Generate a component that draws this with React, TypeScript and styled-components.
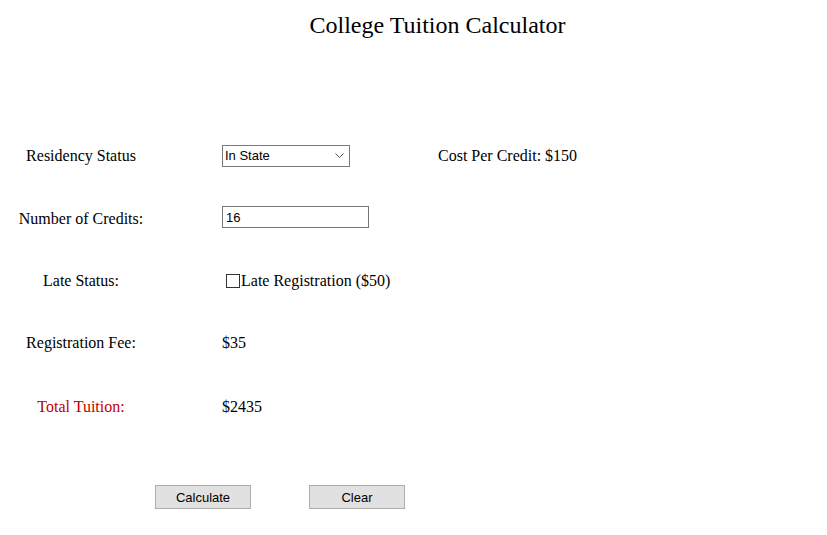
import React, { useState } from 'react'
import styled, { createGlobalStyle } from 'styled-components'

const GlobalStyle = createGlobalStyle`
  html, body {
    margin: 0;
    padding: 0;
    background: #ffffff;
  }
  body {
    font-family: 'Liberation Serif', 'Times New Roman', serif;
    font-size: 16px;
    color: #000;
  }
`

const Page = styled.div`
  width: 827px;
  height: 535px;
`

const Title = styled.h1`
  margin: 0;
  height: 50px;
  padding-left: 48px;
  font-size: 24px;
  font-weight: normal;
  line-height: 50px;
  text-align: center;
`

const Form = styled.div`
  display: grid;
  grid-template-columns: 162px 156px auto;
  grid-template-rows: 63px 63px 61px 64px 64px;
  column-gap: 60px;
  align-items: center;
  margin-top: 74px;
`

const Label = styled.div<{ $accent?: boolean }>`
  text-align: center;
  color: ${({ $accent }) => ($accent ? '#c00000' : '#000')};
`

const Cell = styled.div`
  display: flex;
  align-items: center;
  white-space: nowrap;
`

const Select = styled.select`
  width: 128px;
  height: 22px;
  margin: 0;
  padding: 0 2px;
  border: 1px solid #7a7a7a;
  border-radius: 0;
  background: #fff;
  font-family: 'Liberation Sans', Arial, sans-serif;
  font-size: 13px;
  color: #000;
  appearance: none;
  background-image: url("data:image/svg+xml;utf8,<svg xmlns='http://www.w3.org/2000/svg' width='9' height='6' viewBox='0 0 9 6'><path d='M0.5 0.5 L4.5 4.5 L8.5 0.5' fill='none' stroke='%23555' stroke-width='1'/></svg>");
  background-repeat: no-repeat;
  background-position: right 5px center;
`

const TextInput = styled.input`
  width: 147px;
  height: 22px;
  box-sizing: border-box;
  margin: -3px 0 0;
  padding: 0 3px;
  border: 1px solid #767676;
  font-family: 'Liberation Sans', Arial, sans-serif;
  font-size: 13px;
`

const CheckLabel = styled.label`
  display: flex;
  align-items: center;
  padding-left: 4px;
  white-space: nowrap;
`

const Check = styled.input`
  appearance: none;
  width: 14px;
  height: 14px;
  margin: 0 1px 0 0;
  border: 1px solid #333;
  background: #fff;
`

const Buttons = styled.div`
  display: flex;
  gap: 58px;
  margin-top: 46px;
  padding-left: 155px;
`

const Button = styled.button`
  width: 96px;
  height: 24px;
  margin: 0;
  padding: 0;
  border: 1px solid #adadad;
  background: #e1e1e1;
  font-family: 'Liberation Sans', Arial, sans-serif;
  font-size: 13px;
  color: #000;
`

const rates: Record<string, number> = { in: 150, out: 350 }

export default function App() {
  const [residency, setResidency] = useState('in')
  const [credits, setCredits] = useState('16')
  const [late, setLate] = useState(false)

  const perCredit = rates[residency]
  const total = perCredit * (Number(credits) || 0) + 35 + (late ? 50 : 0)

  return (
    <Page>
      <GlobalStyle />
      <Title>College Tuition Calculator</Title>

      <Form>
        <Label>Residency Status</Label>
        <Cell>
          <Select value={residency} onChange={(e) => setResidency(e.target.value)}>
            <option value="in">In State</option>
            <option value="out">Out of State</option>
          </Select>
        </Cell>
        <Cell>Cost Per Credit: ${perCredit}</Cell>

        <Label>Number of Credits:</Label>
        <Cell>
          <TextInput value={credits} onChange={(e) => setCredits(e.target.value)} />
        </Cell>
        <div />

        <Label>Late Status:</Label>
        <Cell>
          <CheckLabel>
            <Check type="checkbox" checked={late} onChange={(e) => setLate(e.target.checked)} />
            Late Registration ($50)
          </CheckLabel>
        </Cell>
        <div />

        <Label>Registration Fee:</Label>
        <Cell>$35</Cell>
        <div />

        <Label $accent>Total Tuition:</Label>
        <Cell>${total}</Cell>
        <div />
      </Form>

      <Buttons>
        <Button>Calculate</Button>
        <Button>Clear</Button>
      </Buttons>
    </Page>
  )
}
